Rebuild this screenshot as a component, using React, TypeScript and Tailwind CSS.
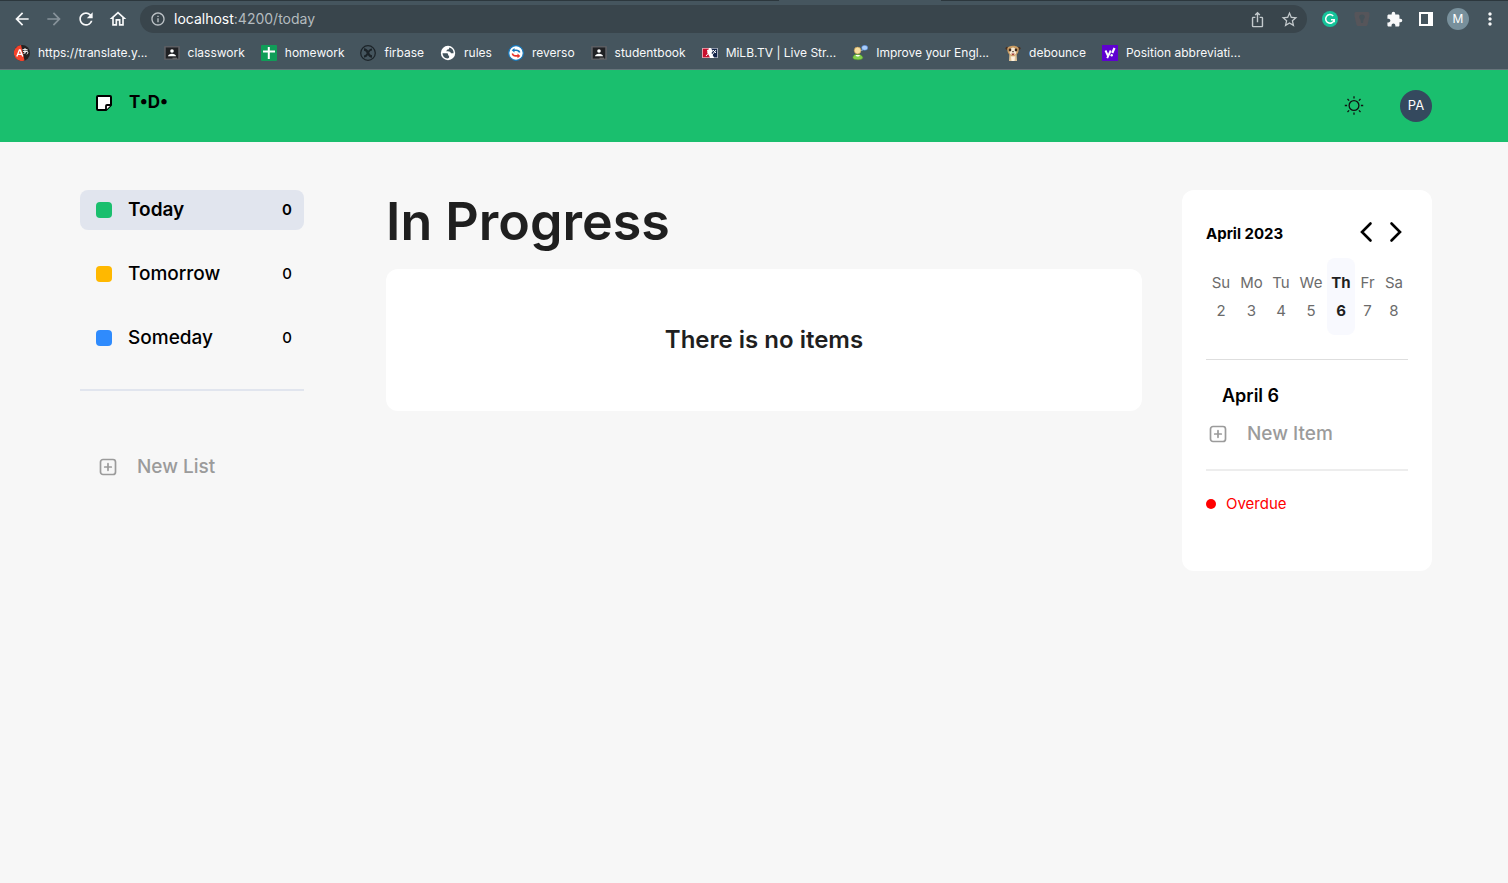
import type { ReactNode } from "react";
import {
  MdArrowBack,
  MdArrowForward,
  MdExtension,
  MdInfoOutline,
  MdIosShare,
  MdMoreVert,
  MdOutlineHome,
  MdRefresh,
  MdStarBorder,
} from "react-icons/md";

function TranslateIcon() {
  return (
    <svg viewBox="0 0 16 16" className="size-4">
      <circle cx="8" cy="8" r="8" fill="#222" />
      <path d="M7 0.1A8 8 0 1 0 10.500 15.600L7 0.1Z" fill="#f5432b" />
      <path d="M2.800 11.500 5.400 5h.8l2.600 6.500M3.900 9.400h3.900" fill="none" stroke="#fff" strokeWidth="1.400" />
      <path d="M8.500 4.600h5M11 3v5.500M9 6.500h4.500M13 5.500 9.500 9M12.500 6.300c2 .4 1.600 2.500.2 2.900" fill="none" stroke="#fff" strokeWidth=".9" />
    </svg>
  );
}

function ClassroomIcon() {
  return (
    <svg viewBox="0 0 16 16" className="size-4">
      <rect y="1" width="16" height="14" rx="1" fill="#5b5e63" />
      <rect x="1.8" y="2.5" width="12.4" height="11" fill="#202124" />
      <circle cx="8" cy="6" r="1.8" fill="#fff" />
      <path d="M4 11.2c0-3.4 8-3.4 8 0Z" fill="#fff" />
      <path d="M8.5 13.2h4.5" stroke="#777" />
    </svg>
  );
}

function SheetIcon() {
  return (
    <svg viewBox="0 0 16 16" className="size-4">
      <rect width="16" height="16" rx="1" fill="#109d58" />
      <path d="M2 6.5h12M7.8 2v12" stroke="#fff" strokeWidth="2" />
    </svg>
  );
}

function CrossCircleIcon() {
  return (
    <svg viewBox="0 0 16 16" className="size-4" fill="none" stroke="#1c2429">
      <circle cx="8" cy="8" r="7.3" strokeWidth="1.3" />
      <path d="M4 4.500c2.500 0 3 1.500 4 3.500s1.500 3.500 4 3.500" strokeWidth="2.400" />
      <path d="M12 4.500C9.500 4.500 9 6 8 8s-1.500 3.500-4 3.500" strokeWidth="1.800" />
    </svg>
  );
}

function GlobeIcon() {
  return (
    <svg viewBox="0 0 16 16" className="size-4">
      <circle cx="8" cy="8" r="7.200" fill="#fff" />
      <path d="M2.500 8.200h4.300c1 0 1.300.6 1.300 1.500 0 .8.600 1 1 1v1.600c0 .8-.7 1-1.600 1.200A5.600 5.600 0 0 1 2.500 8.200Z" fill="#43545d" />
      <path d="M9.200 2.500c0 1.500-.4 2-1.600 2-.9 0-.7 1.600-1.700 1.700 1 .2 3 0 4 .5 1 .6.600 1.600 1.700 1.600h2A5.700 5.700 0 0 0 9.200 2.500Z" fill="#43545d" />
    </svg>
  );
}

function ReversoIcon() {
  return (
    <svg viewBox="0 0 16 16" className="size-4">
      <circle cx="8" cy="8" r="7.300" fill="#fff" stroke="#1679bd" strokeWidth="1.200" />
      <path d="M5.500 5.200h2.700c2 0 3 .8 3.500 2.300" fill="none" stroke="#1679bd" strokeWidth="1.600" />
      <path d="M6.500 2.900v4.600L3.700 5.200Z" fill="#1679bd" />
      <path d="M4.300 8.500c.5 1.600 1.500 2.400 3.200 2.400h2.500" fill="none" stroke="#e5352b" strokeWidth="1.600" />
      <path d="M9.500 8.600v4.600l2.800-2.300Z" fill="#e5352b" />
    </svg>
  );
}

function BaseballIcon() {
  return (
    <svg viewBox="0 0 16 16" className="size-4">
      <rect y="3" width="16" height="10" rx="1" fill="#fff" />
      <path d="M.6 3.600H7L5 7l3 5.400H.6Z" fill="#c8102e" />
      <path d="M9 3.600h6.400v8.800H12L9.500 8 11 6Z" fill="#14264b" />
      <path d="m5 5 2.500 2L4 11M11 5l3 3M10 10l4-5" stroke="#fff" fill="none" />
    </svg>
  );
}

function TutorIcon() {
  return (
    <svg viewBox="0 0 16 16" className="size-4">
      <path d="M.8 12.500C1 8 9.800 8 10.800 12.500c.5 3-10 3-10 0Z" fill="#83cf4b" stroke="#4f9a2a" strokeWidth=".5" />
      <path d="M3.500 10c1 2 3.500 2 4.500 0" fill="#fff" />
      <circle cx="5.600" cy="5.500" r="3.400" fill="#f7dfa0" stroke="#b98b3b" strokeWidth=".5" />
      <path d="m9 6 1-2 1.500 1Z" fill="#a9cdfa" />
      <ellipse cx="12.700" cy="2.800" rx="3.100" ry="2.500" fill="#a9cdfa" stroke="#3f78d0" strokeWidth=".5" />
    </svg>
  );
}

function MeerkatIcon() {
  return (
    <svg viewBox="0 0 16 16" className="size-4">
      <path d="M4.500 8h7l.5 8H4Z" fill="#dfc499" />
      <circle cx="2" cy="3.200" r="1.500" fill="#4a3323" />
      <circle cx="14" cy="3.200" r="1.500" fill="#4a3323" />
      <path d="M2.300 3.500C3-.2 13-.2 13.700 3.500c.3 4-2.200 7.500-5.700 7.500S2 7.500 2.300 3.500Z" fill="#c99c62" />
      <path d="M8 2.500c2.500 0 4.500 4 2.800 6.500-1 1.500-4.600 1.500-5.600 0C3.500 6.500 5.500 2.500 8 2.500Z" fill="#f7ead4" />
      <ellipse cx="5" cy="5" rx="1.300" ry="1.400" fill="#3a271c" />
      <ellipse cx="11" cy="5" rx="1.300" ry="1.400" fill="#3a271c" />
      <path d="M6.800 6.200h2.400L8 7.600Z" fill="#2b1b14" />
      <path d="M6.500 8.400h3c0 2.300-3 2.300-3 0Z" fill="#a4413a" />
      <path d="M6 11.500h4L9.500 16h-3Z" fill="#fff3df" />
    </svg>
  );
}

function YahooIcon() {
  return (
    <svg viewBox="0 0 16 16" className="size-4">
      <rect width="16" height="16" fill="#5f01d1" />
      <path d="m3.500 5.500 2.300 5M8.700 5.500 5.200 13.200" stroke="#fff" strokeWidth="1.900" />
      <path d="m12.500 3-2.200 5" stroke="#fff" strokeWidth="2.200" />
      <circle cx="9.700" cy="10.300" r="1.200" fill="#fff" />
    </svg>
  );
}

function NoteIcon() {
  return (
    <svg viewBox="0 0 18 18" className="size-[18px] shrink-0">
      <path d="M3 2h12a1 1 0 0 1 1 1v8l-5 5H3a1 1 0 0 1-1-1V3a1 1 0 0 1 1-1Z" fill="#fff" stroke="#000" strokeWidth="2" strokeLinejoin="round" />
      <path d="M11 16v-4a1 1 0 0 1 1-1h4" fill="#fff" stroke="#000" strokeWidth="1.800" strokeLinejoin="round" />
    </svg>
  );
}

function SunIcon() {
  return (
    <svg viewBox="0 0 20 20" className="size-5" fill="none" stroke="#111" strokeWidth="1.300">
      <circle cx="10" cy="9.500" r="4.900" />
      <path d="M10 .3v2.300M10 16.400v2.300M.8 9.500h2.300M16.900 9.500h2.300M3.500 3l1.600 1.600M14.900 14.400l1.600 1.600M3.500 16l1.600-1.600M14.900 4.600l1.600-1.600" />
    </svg>
  );
}

function PlusSquareIcon() {
  return (
    <svg viewBox="0 0 18 18" className="size-[18px] shrink-0" fill="none" stroke="currentColor" strokeWidth="1.700" strokeLinecap="round">
      <rect x="1.500" y="1.500" width="15" height="15" rx="2.500" />
      <path d="M9 5.700v6.600M5.700 9h6.600" />
    </svg>
  );
}

function Chevron({ d }: { d: string }) {
  return (
    <svg viewBox="0 0 14 22" className="h-[22px] w-3.5" fill="none" stroke="#000" strokeWidth="2.600" strokeLinecap="round">
      <path d={d} />
    </svg>
  );
}

const bookmarks: { label: string; icon: ReactNode }[] = [
  { label: "https://translate.y...", icon: <TranslateIcon /> },
  { label: "classwork", icon: <ClassroomIcon /> },
  { label: "homework", icon: <SheetIcon /> },
  { label: "firbase", icon: <CrossCircleIcon /> },
  { label: "rules", icon: <GlobeIcon /> },
  { label: "reverso", icon: <ReversoIcon /> },
  { label: "studentbook", icon: <ClassroomIcon /> },
  { label: "MiLB.TV | Live Str...", icon: <BaseballIcon /> },
  { label: "Improve your Engl...", icon: <TutorIcon /> },
  { label: "debounce", icon: <MeerkatIcon /> },
  { label: "Position abbreviati...", icon: <YahooIcon /> },
];

function BrowserBar() {
  return (
    <div className="bg-[#45555e] text-[#f8f9fa]">
      <div className="flex h-px bg-[#2c373d]">
        <span className="ml-[779px] w-[162px] bg-[#45555e]" />
      </div>
      <div className="flex h-9 items-center pr-[7px] pl-3">
        <div className="flex gap-3">
          <button aria-label="Back"><MdArrowBack size={20} /></button>
          <button aria-label="Forward" className="text-[#87929a]"><MdArrowForward size={20} /></button>
          <button aria-label="Reload"><MdRefresh size={20} /></button>
          <button aria-label="Home"><MdOutlineHome size={20} /></button>
        </div>
        <div className="ml-3 flex h-7 flex-1 items-center rounded-full bg-[#39454c] pr-2 pl-2.5">
          <MdInfoOutline size={16} className="text-[#bdc3c7]" />
          <a href="#today" className="ml-2 flex-1 text-sm text-[#b4bbbf]">
            <span className="text-white">localhost</span>:4200/today
          </a>
          <div className="flex gap-3.5 text-[#c3c9cc]">
            <button aria-label="Share"><MdIosShare size={17} /></button>
            <button aria-label="Bookmark"><MdStarBorder size={19} /></button>
          </div>
        </div>
        <div className="ml-3 flex items-center gap-2.5">
          <button aria-label="Grammar" className="grid size-[22px] place-items-center">
            <svg viewBox="0 0 16 16" className="size-4">
              <circle cx="8" cy="8" r="8" fill="#15c39a" />
              <path d="M11.200 5A4.300 4.300 0 1 0 12.200 8.800H9M12.200 8.800v2.500" fill="none" stroke="#fff" strokeWidth="1.500" />
            </svg>
          </button>
          <button aria-label="Shield" className="grid size-[22px] place-items-center">
            <svg viewBox="0 0 16 16" className="size-4">
              <path d="M1.500 1h13l1 1v3l-2 9-1 1h-9l-1-1-2-9V2Z" fill="#56555a" />
              <path d="M8 3.500c4 0 3 4 1.500 5L9 12H7l-.5-3.500C5 7.500 4 3.500 8 3.500Z" fill="#465259" />
            </svg>
          </button>
          <button aria-label="Extensions" className="grid size-[22px] place-items-center"><MdExtension size={17} /></button>
          <button aria-label="Side panel" className="grid size-[22px] place-items-center">
            <svg viewBox="0 0 14 14" className="size-3.5">
              <path fillRule="evenodd" d="M0 0h14v14H0ZM2 2v10h7V2Z" fill="#fff" />
            </svg>
          </button>
          <button aria-label="Profile" className="grid size-[22px] place-items-center rounded-full bg-[#78909c] text-xs leading-none text-white">M</button>
          <button aria-label="Menu" className="grid size-[22px] place-items-center"><MdMoreVert size={20} /></button>
        </div>
      </div>
      <nav aria-label="Bookmarks" className="flex h-[33px] items-center gap-4 border-b border-[#66747b] px-3.5 text-xs">
        {bookmarks.map((b) => (
          <a key={b.label} href="#bookmark" className="flex items-center gap-2 whitespace-nowrap">
            {b.icon}
            {b.label}
          </a>
        ))}
      </nav>
    </div>
  );
}

const lists = [
  { name: "Today", count: 0, swatch: "bg-[#1abf6e]", row: "bg-[#e1e5ee] font-semibold" },
  { name: "Tomorrow", count: 0, swatch: "bg-[#ffb800]", row: "font-medium" },
  { name: "Someday", count: 0, swatch: "bg-[#2f8bfd]", row: "font-medium" },
];

function Sidebar() {
  return (
    <aside className="w-56 shrink-0">
      <nav aria-label="Lists" className="flex flex-col gap-6">
        {lists.map((l) => (
          <a key={l.name} href="#list" className={`flex h-10 items-center rounded-lg pr-3 pl-4 text-[19px] text-black ${l.row}`}>
            <span className={`size-4 rounded ${l.swatch}`} />
            <span className="ml-4 flex-1">{l.name}</span>
            <span className="text-[15px]">{l.count}</span>
          </a>
        ))}
      </nav>
      <hr className="mt-[31px] border-t-2 border-[#e1e5ee]" />
      <button className="mt-16 flex items-center pl-[19px] text-[19px] leading-6 font-medium text-[#9b9b9b]">
        <PlusSquareIcon />
        <span className="ml-5">New List</span>
      </button>
    </aside>
  );
}

const days = [
  { day: "Su", date: 2, col: "w-[30px]" },
  { day: "Mo", date: 3, col: "w-[31px]" },
  { day: "Tu", date: 4, col: "w-[28px]" },
  { day: "We", date: 5, col: "w-[32px]" },
  { day: "Th", date: 6, col: "w-[28px]" },
  { day: "Fr", date: 7, col: "w-[25px]" },
  { day: "Sa", date: 8, col: "w-[28px]" },
];
const selected = 6;

function CalendarCard() {
  return (
    <aside className="h-[381px] w-[250px] shrink-0 rounded-xl bg-white p-6">
      <div className="flex h-9 items-center justify-between pr-[5px]">
        <h2 className="pt-1 text-[15px] font-bold text-black">April 2023</h2>
        <div className="flex gap-4">
          <button aria-label="Previous week"><Chevron d="M11.500 2.500 3 11l8.500 8.500" /></button>
          <button aria-label="Next week"><Chevron d="M2.500 2.500 11 11l-8.500 8.500" /></button>
        </div>
      </div>
      <table className="mt-2 w-full table-fixed text-center text-[15px] leading-5 text-[#6b6b6b]">
        <colgroup>
          {days.map((d) => (
            <col key={d.day} className={d.col} />
          ))}
        </colgroup>
        <thead>
          <tr className="h-[39px]">
            {days.map((d) => (
              <th key={d.day} scope="col" className={`p-0 pt-2.5 ${d.date === selected ? "rounded-t-lg bg-[#f8f9fe] font-bold text-[#1f1f1f]" : "font-normal"}`}>
                {d.day}
              </th>
            ))}
          </tr>
        </thead>
        <tbody>
          <tr className="h-[38px]">
            {days.map((d) => (
              <td key={d.day} className={`p-0 pb-2.5 ${d.date === selected ? "rounded-b-lg bg-[#f8f9fe] font-bold text-[#1f1f1f]" : ""}`}>
                {d.date}
              </td>
            ))}
          </tr>
        </tbody>
      </table>
      <hr className="mt-6 border-t border-[#dedede]" />
      <h3 className="mt-[22px] pl-4 text-lg leading-7 font-semibold text-black">April 6</h3>
      <button className="mt-3 flex items-center pl-[3px] text-[19px] leading-6 font-medium text-[#9b9b9b]">
        <PlusSquareIcon />
        <span className="ml-5">New Item</span>
      </button>
      <hr className="mt-[23px] border-t-2 border-[#ededed]" />
      <p className="mt-[23px] flex items-center gap-2.5 text-[15px] leading-5 text-[#ff0000]">
        <span className="size-2.5 rounded-full bg-[#ff0000]" />
        Overdue
      </p>
    </aside>
  );
}

export default function App() {
  return (
    <div className="min-h-screen bg-[#f7f7f7] font-['Inter',sans-serif]">
      <BrowserBar />
      <header className="flex h-[72px] items-center justify-between bg-[#1abf6e] pr-[76px] pl-[95px]">
        <a href="#home" className="mb-[7px] flex items-center gap-4 text-[17px] font-bold text-black">
          <NoteIcon />
          T•D•
        </a>
        <div className="flex items-center gap-9">
          <button aria-label="Toggle theme"><SunIcon /></button>
          <button className="size-8 rounded-full bg-[#34495e] text-[13px] text-white">PA</button>
        </div>
      </header>
      <div className="flex items-start pt-12 pr-[76px] pl-20">
        <Sidebar />
        <main className="mr-10 ml-[82px] min-w-0 flex-1">
          <h1 className="text-[52px] leading-[63px] font-semibold text-[#1f1f1f]">In Progress</h1>
          <section className="mt-4 grid h-[142px] place-items-center rounded-xl bg-white">
            <p className="text-2xl leading-7 font-semibold text-[#1f1f1f]">There is no items</p>
          </section>
        </main>
        <CalendarCard />
      </div>
    </div>
  );
}
